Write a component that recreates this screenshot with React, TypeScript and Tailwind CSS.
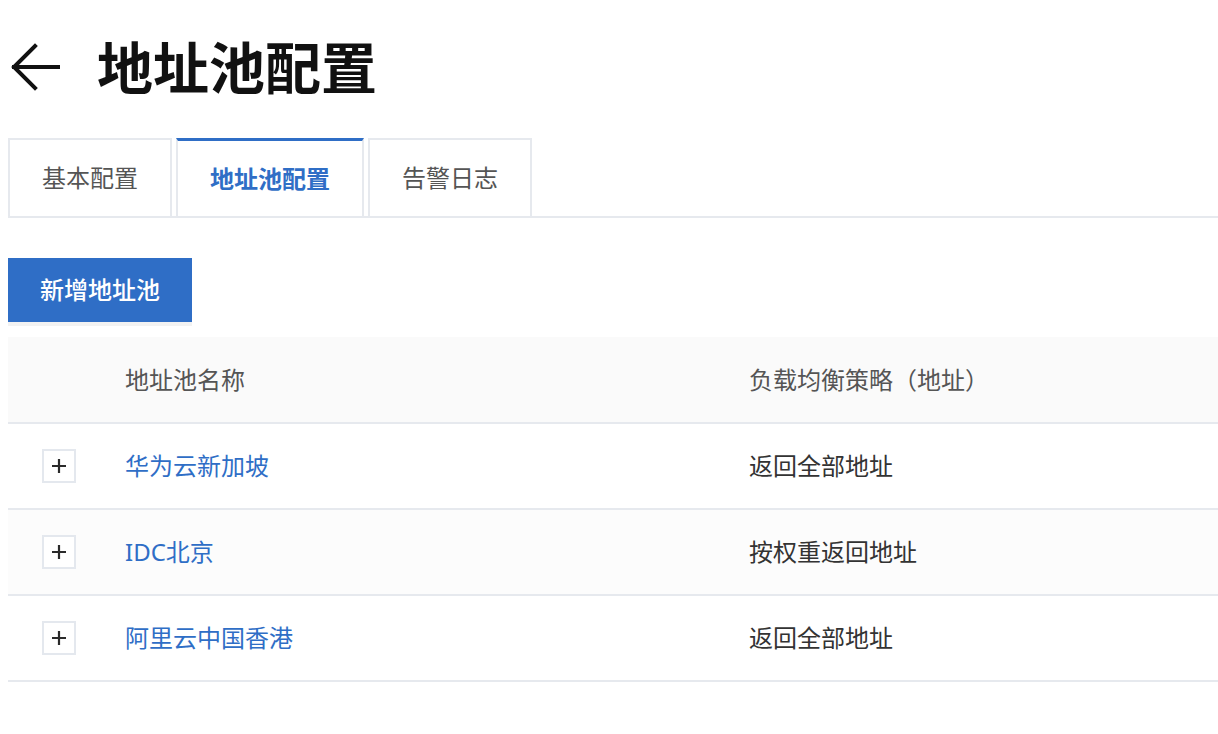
import React from "react";

const FONT = { fontFamily: '"Noto Sans", "Noto Sans CJK SC", sans-serif' };

type Pool = { name: string; strategy: string; shaded?: boolean };

const pools: Pool[] = [
  { name: "华为云新加坡", strategy: "返回全部地址" },
  { name: "IDC北京", strategy: "按权重返回地址", shaded: true },
  { name: "阿里云中国香港", strategy: "返回全部地址" },
];

function BackArrow() {
  return (
    <svg width="50" height="50" viewBox="0 0 50 50" fill="none" stroke="#111" strokeWidth="4" strokeLinecap="square">
      <path d="M3 25 H47" />
      <path d="M24 4 L3 25 L24 46" strokeLinejoin="miter" />
    </svg>
  );
}

function ExpandBox() {
  return (
    <div className="flex h-[34px] w-[34px] items-center justify-center border-2 border-[#e4e8ee] bg-white">
      <svg width="14" height="14" viewBox="0 0 14 14" stroke="#2a2a2a" strokeWidth="2.2">
        <path d="M7 0 V14 M0 7 H14" />
      </svg>
    </div>
  );
}

export default function App() {
  const tabs = ["基本配置", "地址池配置", "告警日志"];
  return (
    <div className="min-h-[734px] w-full bg-white pl-2 pt-[37px]" style={FONT}>
      {/* page heading */}
      <div className="flex h-[60px] items-center">
        <div className="ml-[3px] flex items-center">
          <BackArrow />
        </div>
        <h1 className="ml-[36px] text-[56px] font-bold leading-none text-[#111]">地址池配置</h1>
      </div>

      {/* tabs */}
      <div className="mt-[41px] flex gap-1 border-b-2 border-[#e6e9ee]">
        {tabs.map((t, i) => {
          const active = i === 1;
          return (
            <div
              key={t}
              className={
                active
                  ? "flex h-[78px] items-center border-x-2 border-t-[3px] border-x-[#e6e9ee] border-t-[#2f6ec6] bg-white px-[32px] pt-[1px] text-[24px] font-semibold text-[#2f6ec6]"
                  : "flex h-[78px] items-center border-x-2 border-t-2 border-[#e6e9ee] bg-white px-[32px] text-[24px] text-[#555]"
              }
            >
              {t}
            </div>
          );
        })}
      </div>

      {/* add pool */}
      <button className="mt-[40px] flex h-[64px] w-[184px] items-center justify-center bg-[#2f6ec6] text-[24px] font-medium text-white shadow-[0_4px_0_#f2f2f2]">
        新增地址池
      </button>

      {/* pool table */}
      <div className="mt-[15px]">
        <div className="grid h-[87px] grid-cols-[117px_624px_1fr] items-center border-b-2 border-[#e6e9ee] bg-[#fafafa] text-[24px] text-[#555]">
          <div />
          <div>地址池名称</div>
          <div>负载均衡策略（地址）</div>
        </div>
        {pools.map((p) => (
          <div
            key={p.name}
            className={
              "grid h-[86px] grid-cols-[117px_624px_1fr] items-center border-b-2 border-[#e6e9ee] text-[24px] " +
              (p.shaded ? "bg-[#fcfcfc]" : "bg-white")
            }
          >
            <div className="pl-[34px]">
              <ExpandBox />
            </div>
            <div className="text-[#2f6ec6]">{p.name}</div>
            <div className="text-[#333]">{p.strategy}</div>
          </div>
        ))}
      </div>
    </div>
  );
}
